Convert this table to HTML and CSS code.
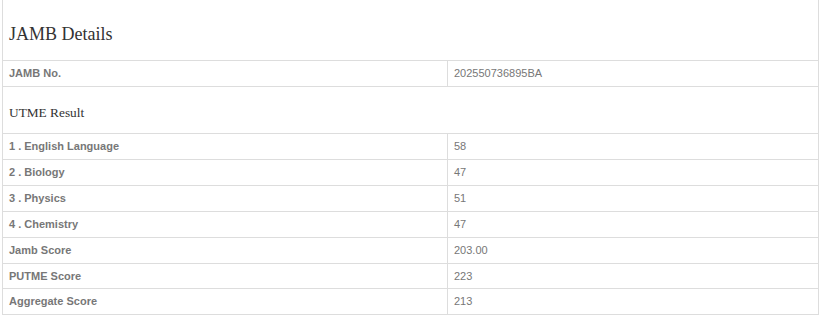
FILE: index.html
```html
<!DOCTYPE html>
<html>
<head>
<meta charset="utf-8">
<link rel="stylesheet" href="styles.css">
</head>
<body>
<div class="wrap">
<table class="details">
<colgroup><col class="c1"><col class="c2"></colgroup>
<tbody>
<tr><td colspan="2" class="title">JAMB Details</td></tr>
<tr class="row"><th>JAMB No.</th><td>202550736895BA</td></tr>
<tr><td colspan="2" class="subtitle">UTME Result</td></tr>
<tr class="row"><th>1 . English Language</th><td>58</td></tr>
<tr class="row"><th>2 . Biology</th><td>47</td></tr>
<tr class="row"><th>3 . Physics</th><td>51</td></tr>
<tr class="row"><th>4 . Chemistry</th><td>47</td></tr>
<tr class="row"><th>Jamb Score</th><td>203.00</td></tr>
<tr class="row row-tight"><th>PUTME Score</th><td>223</td></tr>
<tr class="row"><th>Aggregate Score</th><td>213</td></tr>
</tbody>
</table>
</div>
</body>
</html>
```
FILE: styles.css
```css
html, body { margin: 0; padding: 0; background: #fff; }
.wrap { padding: 0 2px; }
.details {
  width: 817px;
  table-layout: fixed;
  border-collapse: separate;
  border-spacing: 0;
  border-left: 1px solid #ddd;
}
.c1 { width: 445px; }
.details td, .details th {
  border-right: 1px solid #ddd;
  border-bottom: 1px solid #ddd;
  padding: 0 6px;
  text-align: left;
}
.details .title {
  font-family: "Liberation Serif", "Times New Roman", serif;
  font-size: 18px;
  line-height: 20px;
  color: #333;
  padding: 24px 6px 16px;
  vertical-align: top;
}
.details .subtitle {
  font-family: "Liberation Serif", "Times New Roman", serif;
  font-size: 13.33px;
  line-height: 15px;
  color: #333;
  padding: 18px 6px 13px;
  vertical-align: top;
}
.row th, .row td {
  height: 25px;
  box-sizing: content-box;
  padding-top: 0;
  padding-bottom: 0;
  font-family: "Liberation Sans", Arial, sans-serif;
  font-size: 11px;
  line-height: 13px;
  color: #777;
  vertical-align: middle;
}
.row-tight th, .row-tight td { height: 24px; }
.row th { font-weight: bold; }
.row td { font-weight: normal; }
```
